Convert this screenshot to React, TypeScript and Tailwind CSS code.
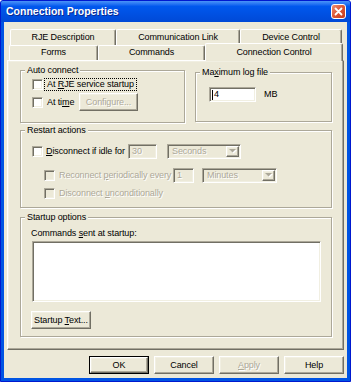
import React from 'react';

// classic 3D edges in XP beige scheme
const raised =
  'border border-t-white border-l-white border-r-[#716F64] border-b-[#716F64] shadow-[inset_-1px_-1px_0_#ACA899,inset_1px_1px_0_#F1EFE2]';
const sunken =
  'border border-t-[#ACA899] border-l-[#ACA899] border-r-white border-b-white shadow-[inset_1px_1px_0_#716F64,inset_-1px_-1px_0_#F1EFE2]';
const grey = 'text-[#ACA899] [text-shadow:1px_1px_0_#fff]';

function Check({ off }: { off?: boolean }) {
  return <span className={`w-[11px] h-[11px] shrink-0 ${sunken} ${off ? 'bg-[#ECE9D8]' : 'bg-white'}`} />;
}

function Btn({ children, off, className }: { children: React.ReactNode; off?: boolean; className?: string }) {
  return (
    <button className={`h-[18px] flex items-center justify-center bg-[#ECE9D8] leading-[11px] ${raised} ${off ? grey : ''} ${className}`}>
      <span>{children}</span>
    </button>
  );
}

function Group({ title, className, children }: { title: React.ReactNode; className?: string; children: React.ReactNode }) {
  return (
    <fieldset className={`border border-[#ACA899] shadow-[inset_1px_1px_0_#fff,1px_1px_0_#fff] ${className}`}>
      <legend className="ml-[4px] px-[2px] leading-[11px] bg-[#ECE9D8]">{title}</legend>
      {children}
    </fieldset>
  );
}

function Arrow({ off }: { off?: boolean }) {
  return (
    <svg width="8" height="5" viewBox="0 0 8 5">
      {off && <path d="M1 1h7l-3.5 3.5z" fill="#fff" />}
      <path d="M0 0h7l-3.5 3.5z" fill={off ? '#ACA899' : '#000'} />
    </svg>
  );
}

function Combo({ label, className }: { label: string; className?: string }) {
  return (
    <div className={`h-full p-[1px] bg-[#ECE9D8] flex items-center ${sunken} ${className}`}>
      <span className={`flex-1 pl-[3px] leading-[11px] ${grey}`}>{label}</span>
      <span className={`w-[13px] h-full flex items-center justify-center ${raised}`}>
        <Arrow off />
      </span>
    </div>
  );
}

function Tab({ label, className, selected }: { label: string; className?: string; selected?: boolean }) {
  return (
    <div
      className={`flex items-center justify-center rounded-t-[2px] border-t border-l border-r border-t-white border-l-white border-r-[#716F64] shadow-[inset_-1px_0_0_#ACA899] bg-[#ECE9D8] ${
        selected ? 'h-[18px] -mb-[1px] relative z-10' : 'h-full'
      } ${className}`}
    >
      {label}
    </div>
  );
}

export default function App() {
  return (
    <div className="w-[351px] h-[382px] font-['Liberation_Sans',Arial,sans-serif] text-[9px] tracking-[-0.1px] whitespace-nowrap text-black select-none">
      <div className="h-full flex flex-col rounded-t-[3px] border border-[#0019CF] bg-[#0054E3] overflow-hidden">
        {/* Title bar */}
        <div className="h-[21px] shrink-0 flex items-center justify-between pl-[5px] pr-[4px] bg-linear-to-b from-[#4A93F8] via-[#0058EE] via-[25%] to-[#0049D6]">
          <span className="text-white font-bold text-[10.5px] tracking-normal [text-shadow:1px_1px_0_#0A2A8F]">Connection Properties</span>
          <span className="w-[15px] h-[15px] rounded-[3px] border border-white bg-linear-to-br from-[#EC8E72] via-[#DB5534] to-[#C43C1C] flex items-center justify-center">
            <svg width="13" height="13" viewBox="0 0 13 13">
              <path d="M3.5 3.5l6 6M9.5 3.5l-6 6" stroke="#fff" strokeWidth="1.8" strokeLinecap="round" />
            </svg>
          </span>
        </div>

        {/* Dialog body */}
        <div className="flex-1 mx-[3px] mb-[3px] bg-[#ECE9D8] flex flex-col">
          <div className="pt-[7px]">
            <div className="flex h-[16px] pl-[6px]">
              <Tab label="RJE Description" className="w-[106px]" />
              <Tab label="Communication Link" className="w-[124px]" />
              <Tab label="Device Control" className="w-[102px]" />
            </div>
            <div className="flex h-[15px] items-end pl-[5px]">
              <Tab label="Forms" className="w-[89px]" />
              <Tab label="Commands" className="w-[107px]" />
              <Tab label="Connection Control" className="w-[138px]" selected />
            </div>
          </div>

          {/* Tab page */}
          <div className={`mx-[3px] h-[290px] bg-[#ECE9D8] pt-[4px] pl-[12px] ${raised}`}>
            <div className="flex items-start">
              <Group title="Auto connect" className="w-[165px] h-[58px]">
                <div className="flex flex-col pl-[11px]">
                  <div className="mt-[1px] h-[14px] flex items-center">
                    <Check />
                    <span className="ml-[1px] px-[2px] leading-[11px] border border-dotted border-black">
                      At <u>R</u>JE service startup
                    </span>
                  </div>
                  <div className="mt-[2px] h-[18px] flex items-center">
                    <Check />
                    <span className="ml-[1px] w-[35px] px-[3px] leading-[11px]">
                      At ti<u>m</u>e
                    </span>
                    <Btn off className="w-[59px]">
                      Configure...
                    </Btn>
                  </div>
                </div>
              </Group>

              <Group
                title={
                  <>
                    Ma<u>x</u>imum log file
                  </>
                }
                className="ml-[10px] mt-[2px] w-[137px] h-[55px]"
              >
                <div className="mt-[9px] pl-[13px] flex items-center">
                  <div className={`w-[47px] h-[15px] bg-white flex items-center pl-[2px] leading-[11px] ${sunken}`}>
                    <span className="w-px h-[10px] bg-black mr-[1px]" />4
                  </div>
                  <span className="ml-[8px]">MB</span>
                </div>
              </Group>
            </div>

            <Group title="Restart actions" className="mt-[2px] w-[312px] h-[83px]">
              <div className="flex flex-col pl-[11px]">
                <div className="mt-[8px] h-[15px] flex items-center">
                  <Check />
                  <span className="ml-[1px] w-[84px] pl-[2px] leading-[11px]">
                    <u>D</u>isconnect if idle for
                  </span>
                  <div className={`w-[29px] h-full bg-[#ECE9D8] flex items-center pl-[3px] leading-[11px] ${sunken} ${grey}`}>30</div>
                  <Combo label="Seconds" className="ml-[10px] w-[74px]" />
                </div>
                <div className="mt-[9px] h-[15px] flex items-center pl-[12px]">
                  <Check off />
                  <span className={`ml-[1px] w-[117px] pl-[3px] leading-[11px] ${grey}`}>
                    Reconnect <u>p</u>eriodically every
                  </span>
                  <div className={`w-[21px] h-full bg-[#ECE9D8] flex items-center pl-[3px] leading-[11px] ${sunken} ${grey}`}>1</div>
                  <Combo label="Minutes" className="ml-[8px] w-[75px]" />
                </div>
                <div className="mt-[3px] h-[14px] flex items-center pl-[12px]">
                  <Check off />
                  <span className={`ml-[1px] pl-[3px] leading-[11px] ${grey}`}>
                    Disconnect <u>u</u>nconditionally
                  </span>
                </div>
              </div>
            </Group>

            <Group title="Startup options" className="mt-[4px] w-[312px] h-[125px]">
              <div className="flex flex-col items-start pl-[10px]">
                <span className="mt-[5px] leading-[11px]">
                  Commands <u>s</u>ent at startup:
                </span>
                <textarea readOnly className={`mt-[2px] ml-[1px] w-[289px] h-[61px] bg-white resize-none outline-none ${sunken}`} />
                <Btn className="mt-[9px] w-[60px]">
                  Startup <u>T</u>ext...
                </Btn>
              </div>
            </Group>
          </div>

          {/* Buttons */}
          <div className="mt-[6px] flex justify-end gap-[5px] pr-[3px]">
            <div className="w-[60px] h-[18px] border border-black flex">
              <Btn className="flex-1 h-full">OK</Btn>
            </div>
            <Btn className="w-[60px]">Cancel</Btn>
            <Btn off className="w-[60px]">
              <u>A</u>pply
            </Btn>
            <Btn className="w-[60px]">Help</Btn>
          </div>
        </div>
      </div>
    </div>
  );
}
